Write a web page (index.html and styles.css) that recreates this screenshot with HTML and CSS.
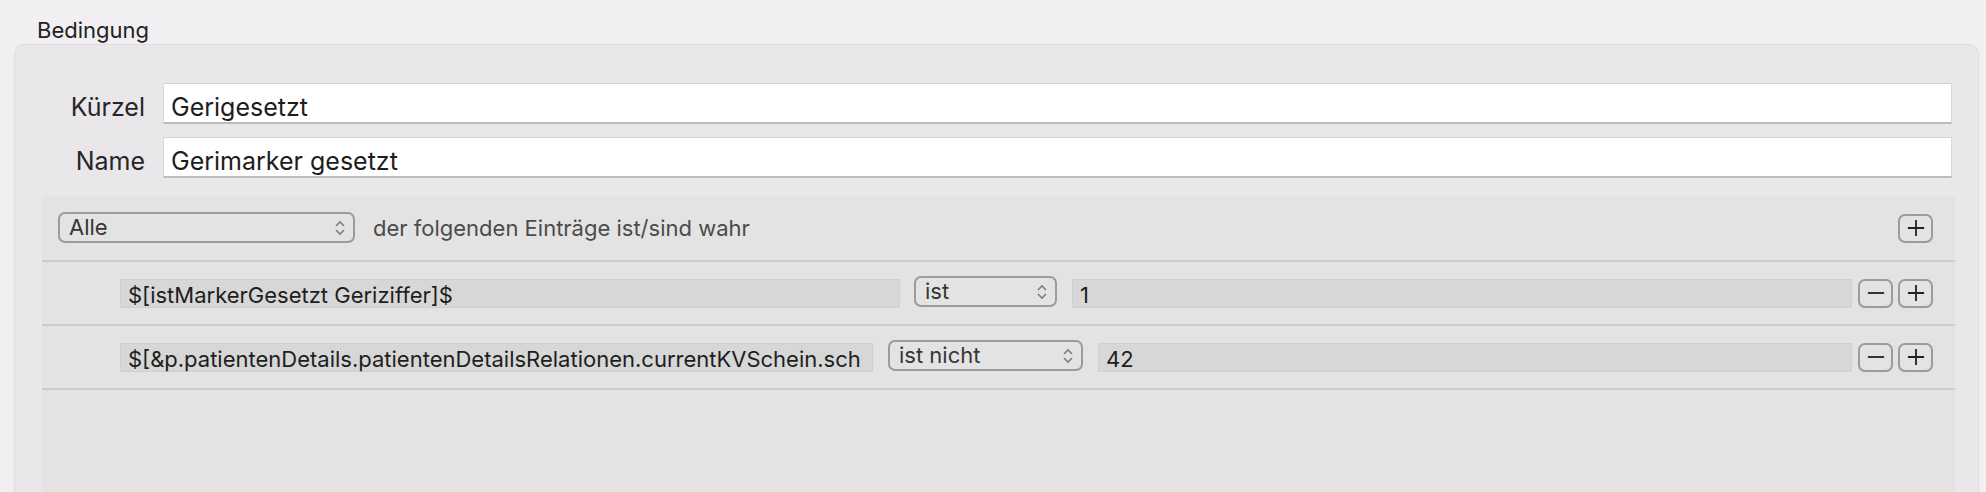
FILE: index.html
```html
<!DOCTYPE html>
<html lang="de">
<head>
<meta charset="UTF-8">
<title>Bedingung</title>
<link rel="stylesheet" href="styles.css">
</head>
<body>
<div class="title">Bedingung</div>

<div class="group">
    <div class="form">
        <label class="form-label">Kürzel</label>
        <div class="text-field">Gerigesetzt</div>
        <label class="form-label">Name</label>
        <div class="text-field">Gerimarker gesetzt</div>
    </div>

    <div class="rules">
        <div class="rule-header">
            <div class="popup popup-all">
                <span>Alle</span>
                <svg class="chevrons" width="10" height="16" viewBox="0 0 10 16"><path d="M1 6 L5 2 L9 6 M1 10 L5 14 L9 10" fill="none" stroke="#7d7d7d" stroke-width="1.6"/></svg>
            </div>
            <span class="header-text">der folgenden Einträge ist/sind wahr</span>
            <div class="spacer"></div>
            <div class="btn"><svg width="20" height="20" viewBox="0 0 20 20"><path d="M1 10 H19 M10 1 V19" stroke="#222" stroke-width="2"/></svg></div>
        </div>

        <div class="rule-row">
            <div class="rule-field key-1">$[istMarkerGesetzt Geriziffer]$</div>
            <div class="popup op-1">
                <span>ist</span>
                <svg class="chevrons" width="10" height="16" viewBox="0 0 10 16"><path d="M1 6 L5 2 L9 6 M1 10 L5 14 L9 10" fill="none" stroke="#7d7d7d" stroke-width="1.6"/></svg>
            </div>
            <div class="rule-field value">1</div>
            <div class="btn"><svg width="20" height="20" viewBox="0 0 20 20"><path d="M1 10 H19" stroke="#222" stroke-width="2"/></svg></div>
            <div class="btn"><svg width="20" height="20" viewBox="0 0 20 20"><path d="M1 10 H19 M10 1 V19" stroke="#222" stroke-width="2"/></svg></div>
        </div>

        <div class="rule-row">
            <div class="rule-field key-2">$[&amp;p.patientenDetails.patientenDetailsRelationen.currentKVSchein.sch</div>
            <div class="popup op-2">
                <span>ist nicht</span>
                <svg class="chevrons" width="10" height="16" viewBox="0 0 10 16"><path d="M1 6 L5 2 L9 6 M1 10 L5 14 L9 10" fill="none" stroke="#7d7d7d" stroke-width="1.6"/></svg>
            </div>
            <div class="rule-field value">42</div>
            <div class="btn"><svg width="20" height="20" viewBox="0 0 20 20"><path d="M1 10 H19" stroke="#222" stroke-width="2"/></svg></div>
            <div class="btn"><svg width="20" height="20" viewBox="0 0 20 20"><path d="M1 10 H19 M10 1 V19" stroke="#222" stroke-width="2"/></svg></div>
        </div>
    </div>
</div>
</body>
</html>
```

FILE: styles.css
```css
body {
    margin: 0;
    padding: 0 7px 0 14px;
    background-color: #f1eff2;
    font-family: Inter, "Noto Sans", sans-serif;
    color: #242424;
    overflow: hidden;
    height: 492px;
}
.title {
    font-size: 22px;
    line-height: 28px;
    padding: 16px 0 0 23px;
    height: 28px;
    color: #222;
}
.group {
    background-color: #e9e7ea;
    border: 1px solid #dedcdf;
    border-radius: 10px;
    padding: 38px 23px 0 27px;
    height: 600px;
}
.form {
    display: grid;
    grid-template-columns: 103px 1fr;
    column-gap: 18px;
    row-gap: 13px;
    margin-right: 3px;
}
.form-label {
    text-align: right;
    font-size: 25px;
    padding-top: 8px;
    line-height: 33px;
    color: #262626;
}
.text-field {
    background-color: #fff;
    border-top: 1px solid #d3d2d4;
    border-left: 1px solid #dad9db;
    border-right: 1px solid #dad9db;
    border-bottom: 2px solid #bcbbbd;
    height: 30px;
    padding: 8px 0 0 7px;
    line-height: 30px;
    font-size: 25px;
    color: #1d1d1d;
}
.rules {
    margin-top: 18px;
    background-color: #e3e3e3;
    height: 400px;
}
.rule-header {
    display: flex;
    align-items: center;
    height: 64px;
    padding: 0 22px 0 16px;
    border-bottom: 2px solid #cbcbcb;
}
.rule-row {
    display: flex;
    align-items: center;
    height: 62px;
    padding: 0 22px 0 78px;
    border-bottom: 2px solid #cbcbcb;
}
.spacer {
    flex: 1;
}
.popup {
    display: flex;
    align-items: center;
    justify-content: space-between;
    box-sizing: border-box;
    height: 31px;
    border: 2px solid #9b9b9b;
    border-radius: 7px;
    padding: 0 8px 2px 9px;
    font-size: 22px;
    color: #363636;
}
.popup .chevrons {
    margin-top: 2px;
}
.popup-all {
    width: 297px;
    margin-top: -1px;
}
.op-1 {
    width: 143px;
    margin: -3px 15px 0 14px;
}
.op-2 {
    width: 195px;
    margin: -3px 15px 0 15px;
}
.header-text {
    margin-left: 18px;
    font-size: 22px;
    color: #4b4b4b;
}
.rule-field {
    box-sizing: border-box;
    height: 29px;
    line-height: 25px;
    padding: 3px 0 0 7px;
    background-color: #d7d7d7;
    border: 1px solid #cfcfcf;
    font-size: 22px;
    color: #1e1e1e;
    white-space: nowrap;
    overflow-x: clip;
    overflow-y: visible;
}
.key-1 {
    width: 780px;
}
.key-2 {
    width: 753px;
}
.value {
    flex: 1;
    margin-right: 6px;
}
.btn {
    box-sizing: border-box;
    width: 35px;
    height: 29px;
    border: 2px solid #9b9b9b;
    border-radius: 7px;
    display: flex;
    align-items: center;
    justify-content: center;
}
.btn + .btn {
    margin-left: 5px;
}
.btn svg {
    width: 18px;
    height: 18px;
}
```
